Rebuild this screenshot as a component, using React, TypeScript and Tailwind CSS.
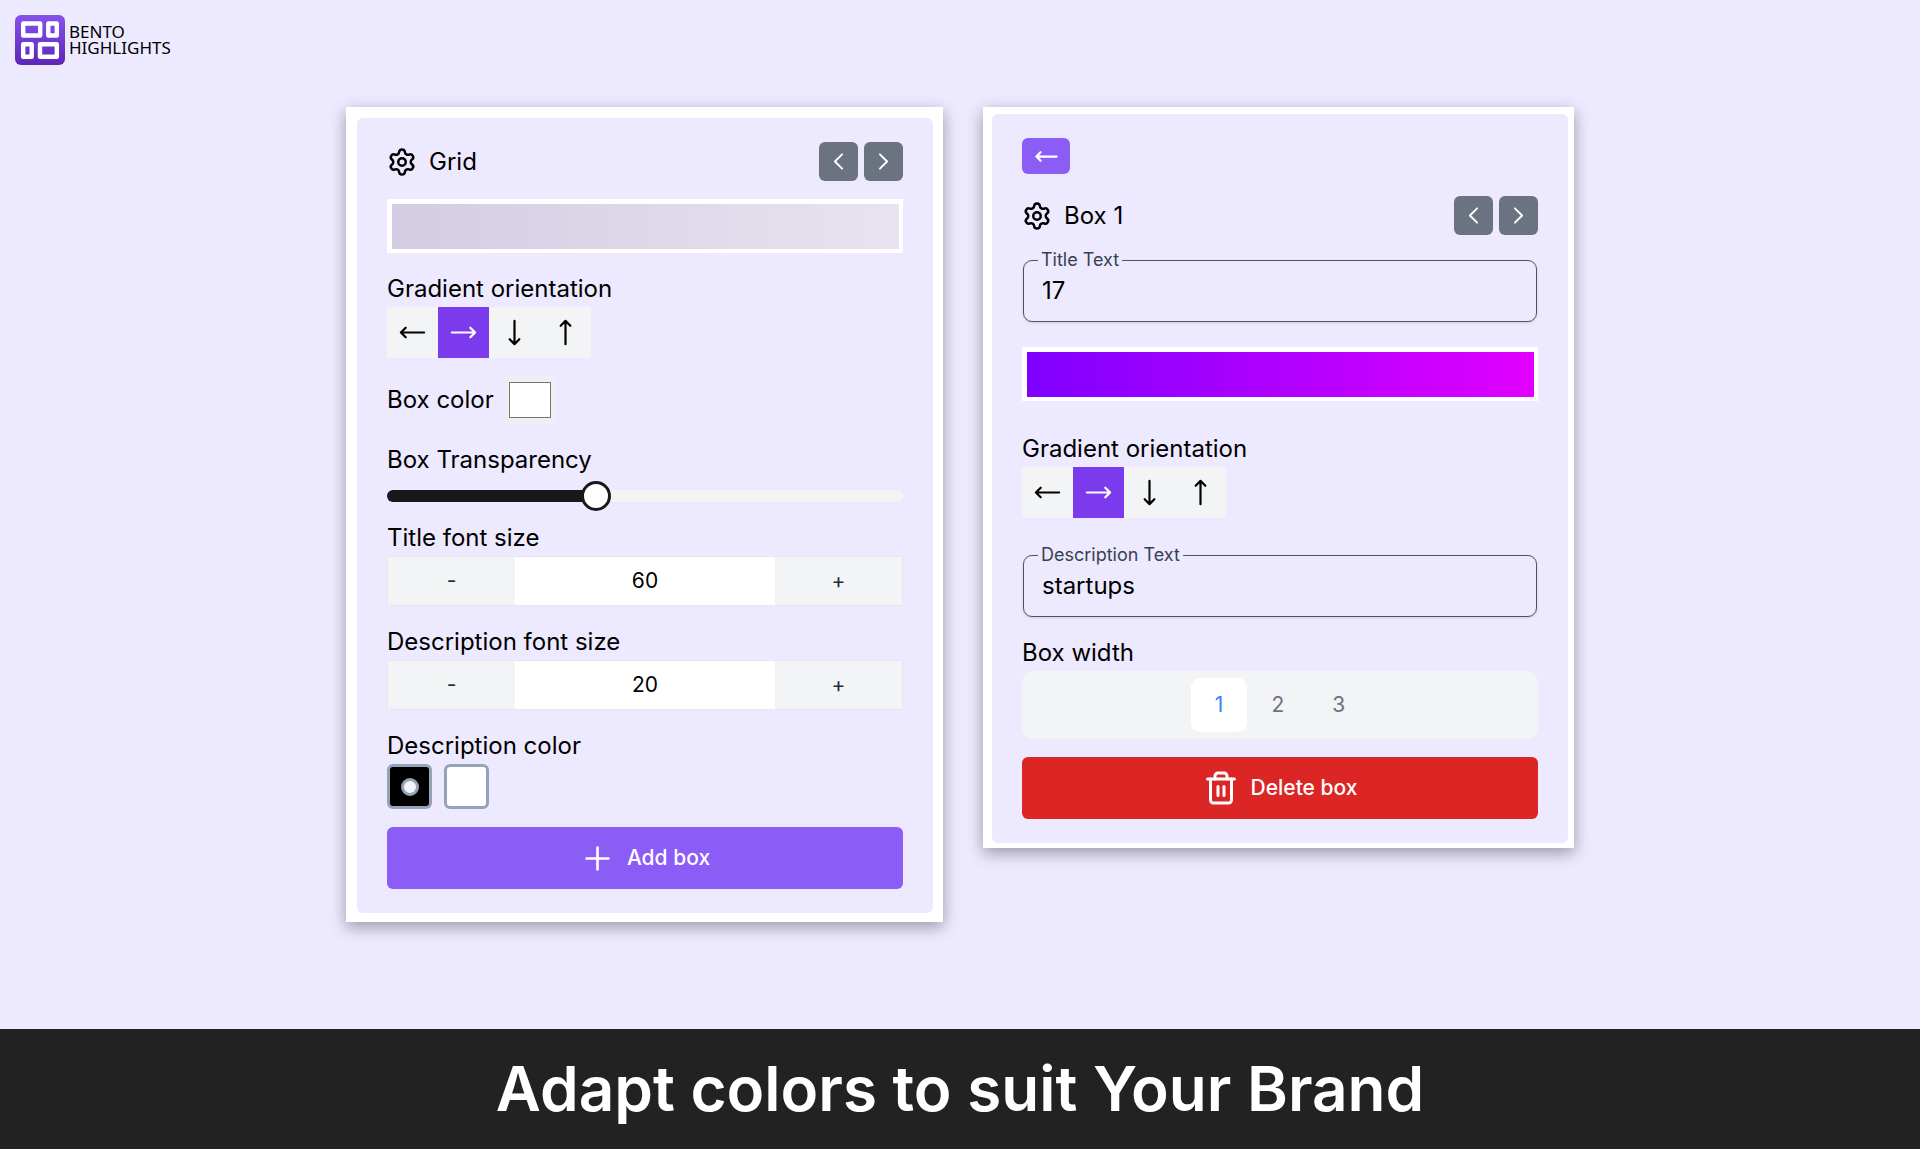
import clsx from 'clsx';
import { Settings, Trash2 } from 'lucide-react';
import React from 'react';
import { IconType } from 'react-icons';
import {
  HiOutlineArrowLongDown,
  HiOutlineArrowLongLeft,
  HiOutlineArrowLongRight,
  HiOutlineArrowLongUp,
  HiOutlineChevronLeft,
  HiOutlineChevronRight,
  HiOutlinePlus,
} from 'react-icons/hi2';

type Orientation = 'left' | 'right' | 'down' | 'up';

const orientations: { id: Orientation; icon: IconType }[] = [
  { id: 'left', icon: HiOutlineArrowLongLeft },
  { id: 'right', icon: HiOutlineArrowLongRight },
  { id: 'down', icon: HiOutlineArrowLongDown },
  { id: 'up', icon: HiOutlineArrowLongUp },
];

const Logo: React.FC = () => (
  <a href="#" className="flex items-center gap-1">
    <svg width="50" height="50" viewBox="0 0 50 50" aria-hidden="true">
      <defs>
        <linearGradient id="logo" x1="0" y1="0" x2="0" y2="1">
          <stop offset="0" stopColor="#8652ec" />
          <stop offset="1" stopColor="#5b26b6" />
        </linearGradient>
      </defs>
      <rect width="50" height="50" rx="6" fill="url(#logo)" />
      <g fill="none" stroke="#fff" strokeWidth="4.4" strokeLinejoin="round">
        <rect x="8.2" y="8.5" width="17" height="12" />
        <rect x="33.3" y="8.5" width="8.5" height="12" />
        <rect x="8.2" y="29.2" width="8.5" height="12.6" />
        <rect x="25" y="29.2" width="16.8" height="12.6" />
      </g>
    </svg>
    <span className="flex flex-col font-['Noto_Sans',sans-serif] text-[17px] leading-4 text-black">
      <span>BENTO</span>
      <span>HIGHLIGHTS</span>
    </span>
  </a>
);

type PanelHeaderProps = {
  title: string;
};

const PanelHeader: React.FC<PanelHeaderProps> = ({ title }) => (
  <div className="flex items-center justify-between">
    <h2 className="flex items-center gap-3">
      <Settings size={30} />
      {title}
    </h2>
    <div className="flex gap-1.5">
      <button
        aria-label="Previous"
        className="flex size-[39px] items-center justify-center rounded-md bg-[#6b7280] text-white"
      >
        <HiOutlineChevronLeft size={23} strokeWidth={2} />
      </button>
      <button
        aria-label="Next"
        className="flex size-[39px] items-center justify-center rounded-md bg-[#6b7280] text-white"
      >
        <HiOutlineChevronRight size={23} strokeWidth={2} />
      </button>
    </div>
  </div>
);

type GradientBarProps = {
  className: string;
};

const GradientBar: React.FC<GradientBarProps> = ({ className }) => (
  <button
    aria-label="Pick gradient"
    className="block h-[54px] w-full bg-white pt-[5px] pr-1 pb-1 pl-[5px]"
  >
    <span className={clsx('block h-full w-full', className)} />
  </button>
);

const OrientationPicker: React.FC = () => {
  const [selected, setSelected] = React.useState<Orientation>('right');

  return (
    <div>
      <p>Gradient orientation</p>
      <div className="flex">
        {orientations.map(({ id, icon: ArrowIcon }) => (
          <button
            key={id}
            aria-label={id}
            aria-pressed={id === selected}
            onClick={() => setSelected(id)}
            className={clsx(
              'flex size-[51px] items-center justify-center',
              id === selected
                ? 'bg-[#7c3aed] text-white'
                : 'bg-[#f3f4f6] text-black',
            )}
          >
            <ArrowIcon size={31} strokeWidth={1.7} />
          </button>
        ))}
      </div>
    </div>
  );
};

type StepperProps = {
  id: string;
  label: string;
  initial: number;
};

const Stepper: React.FC<StepperProps> = ({ id, label, initial }) => {
  const [value, setValue] = React.useState(initial);

  return (
    <div>
      <label htmlFor={id} className="block">
        {label}
      </label>
      <div className="flex h-[50px] rounded-sm border border-[#e5e7eb] text-[21px]">
        <button
          aria-label={`Decrease ${label}`}
          onClick={() => setValue(value - 1)}
          className="flex-1 bg-[#f3f4f6] text-[#1f2937]"
        >
          -
        </button>
        <input
          id={id}
          value={value}
          onChange={(e) => setValue(Number(e.target.value) || 0)}
          className="w-[260px] bg-white text-center outline-none"
        />
        <button
          aria-label={`Increase ${label}`}
          onClick={() => setValue(value + 1)}
          className="flex-1 bg-[#f3f4f6] text-[#1f2937]"
        >
          +
        </button>
      </div>
    </div>
  );
};

type TextFieldProps = {
  id: string;
  label: string;
  initial: string;
};

const TextField: React.FC<TextFieldProps> = ({ id, label, initial }) => (
  <div className="relative px-px">
    <input
      id={id}
      defaultValue={initial}
      className="block h-[62px] w-full rounded-[9px] border border-[#4b5563] px-[18px] pb-0.5 shadow-sm outline-none"
    />
    <label
      htmlFor={id}
      className="absolute -top-3 left-4 bg-[#ede9fe] px-[3px] text-[18px] leading-6 text-[#374151]"
    >
      {label}
    </label>
  </div>
);

const GridPanel: React.FC = () => {
  const [transparency, setTransparency] = React.useState(40);

  return (
    <section className="bg-white pt-[11px] pr-2.5 pb-[9px] pl-[11px] shadow-[0_5px_15px_rgba(0,0,0,0.35)]">
      <div className="flex w-[576px] flex-col gap-[18px] rounded-md bg-[#ede9fe] px-[30px] py-6">
        <PanelHeader title="Grid" />
        <GradientBar className="bg-linear-to-r/srgb from-[#d4cce3] to-[#e9e3ef]" />
        <OrientationPicker />

        <div className="flex items-center gap-3">
          <label htmlFor="box-color">Box color</label>
          <input
            id="box-color"
            type="color"
            defaultValue="#ffffff"
            className="size-12 bg-[#efefef] px-[3px] py-1.5 [&::-webkit-color-swatch]:border [&::-webkit-color-swatch]:border-[#767676] [&::-webkit-color-swatch-wrapper]:p-0"
          />
        </div>

        <div>
          <label htmlFor="transparency" className="block">
            Box Transparency
          </label>
          <input
            id="transparency"
            type="range"
            value={transparency}
            onChange={(e) => setTransparency(Number(e.target.value))}
            style={{ '--fill': `${transparency}%` } as React.CSSProperties}
            className="mt-[3px] mb-[-9px] block h-[30px] w-full appearance-none bg-transparent [&::-webkit-slider-runnable-track]:h-3 [&::-webkit-slider-runnable-track]:rounded-full [&::-webkit-slider-runnable-track]:bg-[linear-gradient(to_right,#18181b_var(--fill),#f4f4f5_var(--fill))] [&::-webkit-slider-thumb]:-mt-[9px] [&::-webkit-slider-thumb]:size-[30px] [&::-webkit-slider-thumb]:appearance-none [&::-webkit-slider-thumb]:rounded-full [&::-webkit-slider-thumb]:border-3 [&::-webkit-slider-thumb]:border-[#18181b] [&::-webkit-slider-thumb]:bg-white"
          />
        </div>

        <Stepper id="title-size" label="Title font size" initial={60} />
        <Stepper
          id="description-size"
          label="Description font size"
          initial={20}
        />

        <div>
          <p>Description color</p>
          <div className="flex gap-3">
            <input
              type="radio"
              name="description-color"
              aria-label="Black"
              defaultChecked
              className="grid size-[45px] appearance-none place-items-center rounded-md border-3 border-[#94a3b8] bg-black checked:before:size-[18px] checked:before:rounded-full checked:before:border-3 checked:before:border-[#94a3b8] checked:before:bg-[#f1f5f9]"
            />
            <input
              type="radio"
              name="description-color"
              aria-label="White"
              className="grid size-[45px] appearance-none place-items-center rounded-md border-3 border-[#94a3b8] bg-white checked:before:size-[18px] checked:before:rounded-full checked:before:border-3 checked:before:border-[#94a3b8] checked:before:bg-[#f1f5f9]"
            />
          </div>
        </div>

        <button className="flex h-[62px] items-center justify-center gap-3 rounded-md bg-[#8b5cf6] text-[21px] font-medium text-white">
          <HiOutlinePlus size={35} strokeWidth={1.8} />
          Add box
        </button>
      </div>
    </section>
  );
};

const BoxPanel: React.FC = () => {
  const [width, setWidth] = React.useState(1);

  return (
    <section className="bg-white pt-[7px] pr-1.5 pb-[5px] pl-[9px] shadow-[0_5px_15px_rgba(0,0,0,0.35)]">
      <div className="flex w-[576px] flex-col rounded-md bg-[#ede9fe] px-[30px] py-6">
        <button
          aria-label="Back"
          className="mb-[22px] flex h-9 w-12 items-center justify-center rounded-md bg-[#8b5cf6] text-white"
        >
          <HiOutlineArrowLongLeft size={27} strokeWidth={2} />
        </button>
        <PanelHeader title="Box 1" />

        <div className="mt-[25px] mb-[30px] flex flex-col gap-[25px]">
          <TextField id="title" label="Title Text" initial="17" />
          <GradientBar className="bg-linear-to-r/srgb from-[#7f00ff] to-[#e100ff]" />
        </div>

        <OrientationPicker />

        <div className="mt-[37px] flex flex-col gap-[18px]">
          <TextField
            id="description"
            label="Description Text"
            initial="startups"
          />
          <div>
            <p>Box width</p>
            <div className="flex h-[68px] items-center justify-center rounded-xl bg-[#f3f4f6] text-[21px]">
              {[1, 2, 3].map((n) => (
                <button
                  key={n}
                  aria-pressed={n === width}
                  onClick={() => setWidth(n)}
                  className={clsx(
                    'h-[54px] rounded-[9px] px-6',
                    n === width ? 'bg-white text-[#3b82f6]' : 'text-[#6b7280]',
                  )}
                >
                  {n}
                </button>
              ))}
            </div>
          </div>
          <button className="flex h-[62px] items-center justify-center gap-3 rounded-md bg-[#dc2626] text-[21px] font-medium text-white">
            <Trash2 size={36} />
            Delete box
          </button>
        </div>
      </div>
    </section>
  );
};

export default function App() {
  return (
    <div className="flex min-h-screen flex-col bg-[#ede9fe] font-['Inter',sans-serif] text-[24px] leading-9 text-black">
      <header className="flex p-[15px]">
        <Logo />
      </header>
      <main className="flex flex-1 flex-wrap items-start justify-center gap-10 pt-[27px] pb-10">
        <GridPanel />
        <BoxPanel />
      </main>
      <footer className="flex h-[120px] items-center justify-center bg-[#222222]">
        <h1 className="text-[62px] font-semibold text-white">
          Adapt colors to suit Your Brand
        </h1>
      </footer>
    </div>
  );
}
